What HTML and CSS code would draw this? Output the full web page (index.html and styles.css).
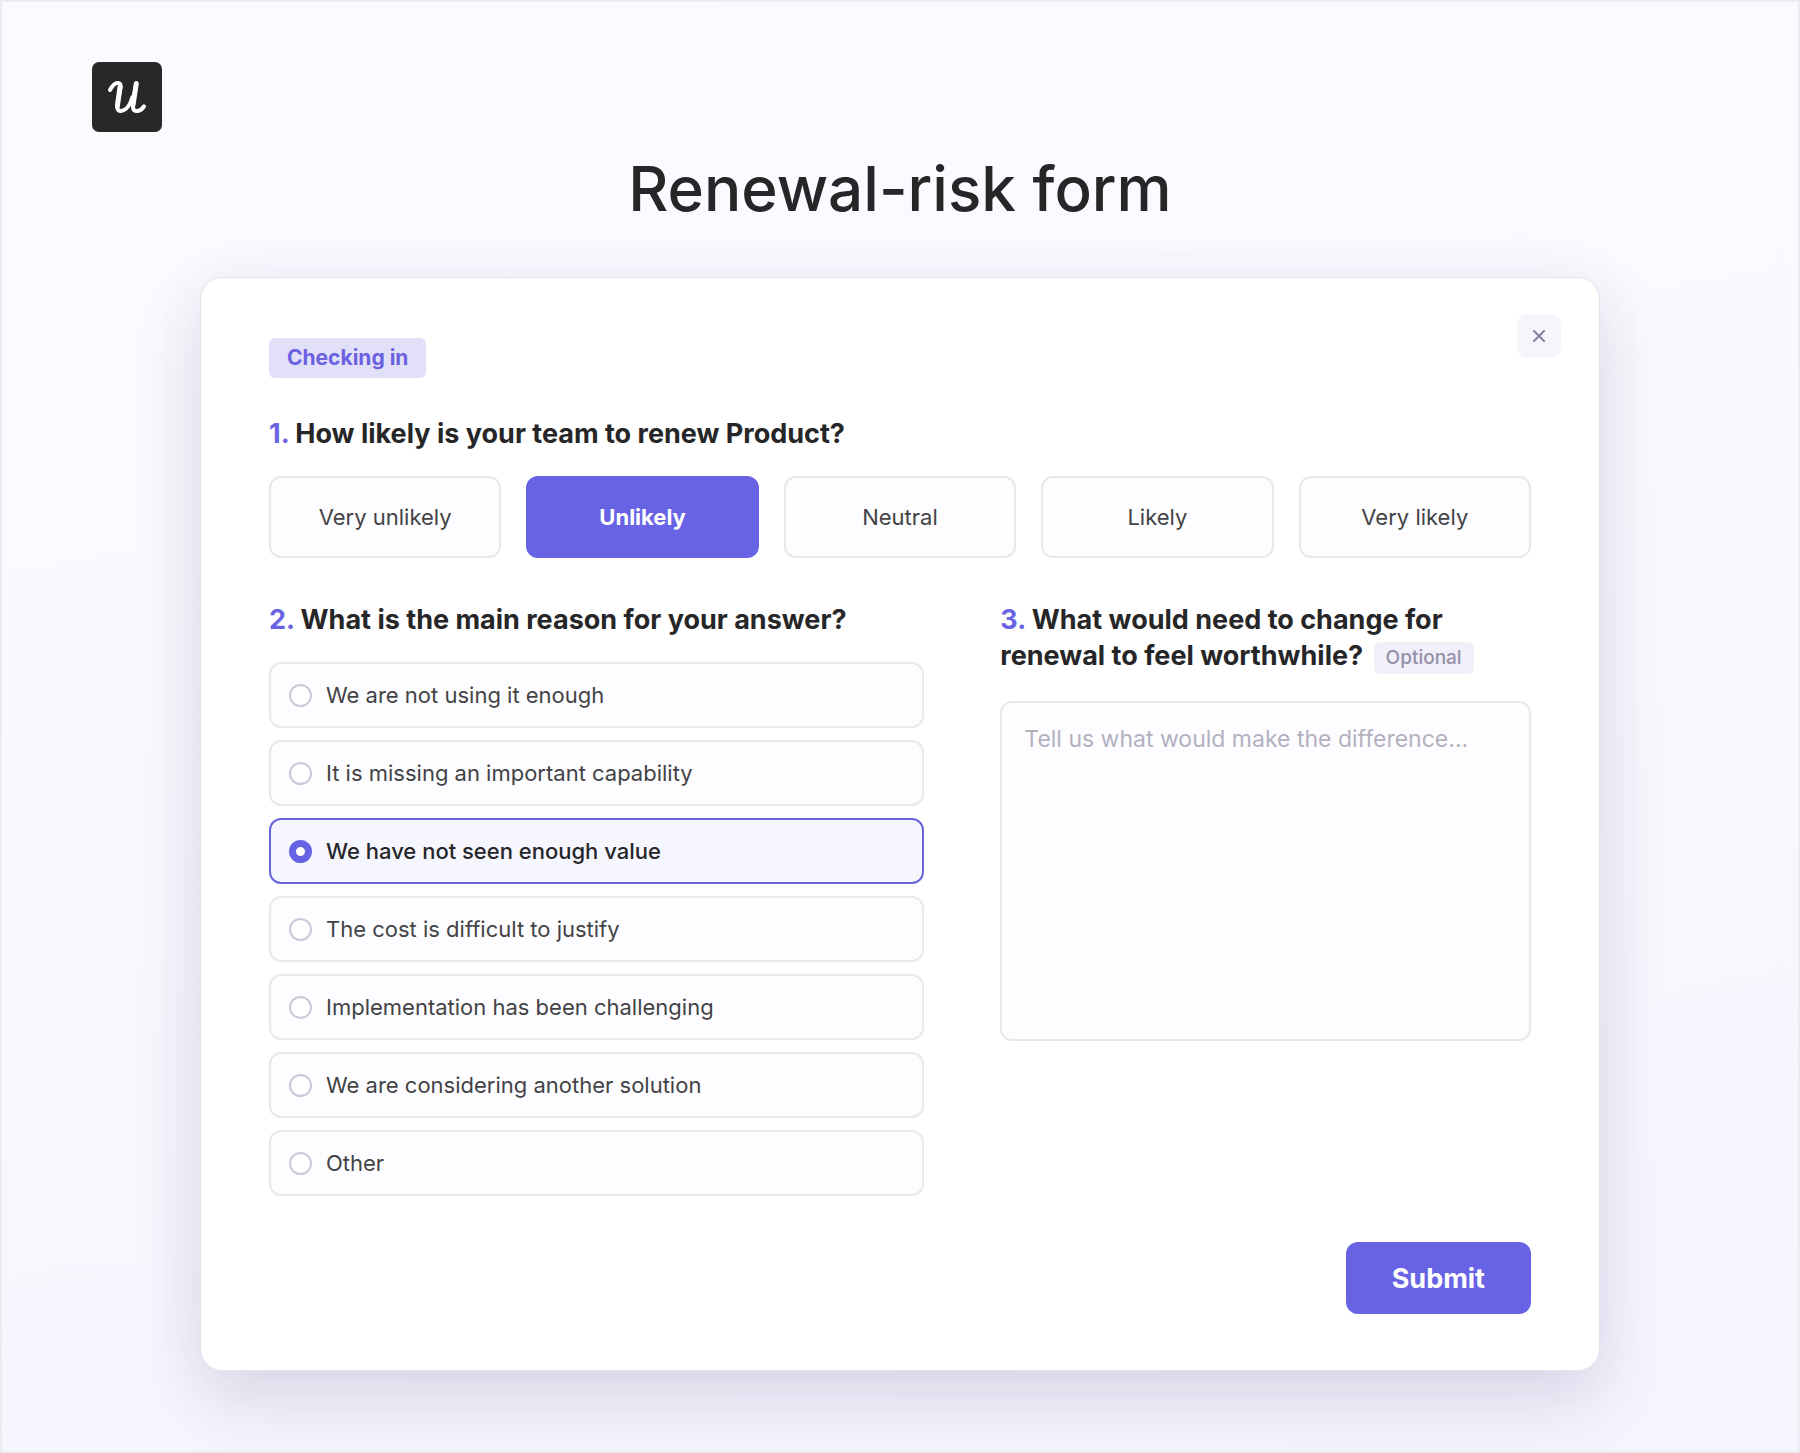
FILE: index.html
```html
<!DOCTYPE html>
<html lang="en">

<head>
  <meta charset="utf-8">
  <meta name="viewport" content="width=device-width, initial-scale=1">
  <title>Renewal-risk form</title>
  <link rel="stylesheet" href="styles.css">
</head>

<body>
  <header>
    <a href="#" class="logo" aria-label="Home">
      <svg viewBox="0 0 70 70" width="70" height="70" aria-hidden="true">
        <path d="M18 28 C21 22.5 24.5 20.4 27 21.2 C29.5 22 28.6 25 28 29 L25.4 42 C24.6 47 26.2 49.4 29 49 C34.5 48.4 38.6 42 40.4 35" />
        <path d="M44.4 21 L41.2 41 C40.4 46.5 41.4 49 44.4 49 C47.5 49 50 47.6 52 44.4" />
        <path d="M28 25 L25.4 44 M44.2 22 L41 43" class="thick" />
      </svg>
    </a>
    <h1>Renewal-risk form</h1>
  </header>

  <main>
    <form class="card">
      <button type="button" class="close-btn" aria-label="Close">
        <svg viewBox="0 0 12 12" width="12" height="12" aria-hidden="true">
          <path d="M1 1 L11 11 M11 1 L1 11" />
        </svg>
      </button>

      <span class="tag">Checking in</span>

      <section>
        <h2><span class="num">1.</span> How likely is your team to renew Product?</h2>
        <div class="scale">
          <button type="button" class="scale-btn">Very unlikely</button>
          <button type="button" class="scale-btn selected" aria-pressed="true">Unlikely</button>
          <button type="button" class="scale-btn">Neutral</button>
          <button type="button" class="scale-btn">Likely</button>
          <button type="button" class="scale-btn">Very likely</button>
        </div>
      </section>

      <div class="columns">
        <section>
          <h2 id="reason-title"><span class="num">2.</span> What is the main reason for your answer?</h2>
          <div class="reasons" role="radiogroup" aria-labelledby="reason-title">
            <label class="reason"><input type="radio" name="reason">We are not using it enough</label>
            <label class="reason"><input type="radio" name="reason">It is missing an important capability</label>
            <label class="reason"><input type="radio" name="reason" checked>We have not seen enough value</label>
            <label class="reason"><input type="radio" name="reason">The cost is difficult to justify</label>
            <label class="reason"><input type="radio" name="reason">Implementation has been challenging</label>
            <label class="reason"><input type="radio" name="reason">We are considering another solution</label>
            <label class="reason"><input type="radio" name="reason">Other</label>
          </div>
        </section>

        <section class="comment">
          <h2><label for="change"><span class="num">3.</span> What would need to change for renewal to feel worthwhile?</label> <span class="optional">Optional</span></h2>
          <textarea id="change" placeholder="Tell us what would make the difference..."></textarea>
        </section>
      </div>

      <div class="actions">
        <button type="submit" class="submit-btn">Submit</button>
      </div>
    </form>
  </main>

  <script>
    const scaleButtons = document.querySelectorAll('.scale-btn');

    scaleButtons.forEach((btn) => {
      btn.addEventListener('click', () => {
        scaleButtons.forEach((other) => {
          other.classList.toggle('selected', other === btn);
          other.setAttribute('aria-pressed', other === btn);
        });
      });
    });

    document.querySelector('.card').addEventListener('submit', (e) => e.preventDefault());
  </script>
</body>

</html>
```

FILE: styles.css
```css
* {
  box-sizing: border-box;
}

body {
  margin: 0;
  min-height: 100vh;
  border: 2px solid #ededf0;
  background: linear-gradient(170deg, #fbfaff 0%, #f9f9fe 35%, #f5f5ff 100%);
  font-family: Inter, 'Liberation Sans', sans-serif;
  color: #262628;
}

header {
  padding: 60px 90px 0;
}

.logo {
  display: block;
  width: 70px;
  height: 70px;
  border-radius: 7px;
  background-color: #282828;
}

.logo path {
  fill: none;
  stroke: white;
  stroke-width: 4;
  stroke-linecap: round;
  stroke-linejoin: round;
}

.logo .thick {
  stroke-width: 5;
}

h1 {
  margin: 17px 0 48px;
  font-size: 62px;
  line-height: 80px;
  font-weight: 500;
  text-align: center;
}

main {
  padding: 0 198px 79px;
}

/* Form card */
.card {
  position: relative;
  padding: 60px 68px 56px;
  border: 1px solid #e4e3ee;
  border-radius: 22px;
  background-color: white;
  box-shadow: 0 30px 70px rgba(40, 36, 76, 0.14), 0 0 60px rgba(104, 99, 228, 0.04);
}

.close-btn {
  position: absolute;
  top: 36px;
  right: 38px;
  display: flex;
  align-items: center;
  justify-content: center;
  width: 44px;
  height: 44px;
  padding: 0;
  border: none;
  border-radius: 10px;
  background-color: #f6f5fc;
  cursor: pointer;
}

.close-btn path {
  stroke: #8680a0;
  stroke-width: 2;
  stroke-linecap: round;
}

.tag {
  display: inline-block;
  padding: 0 18px;
  border-radius: 6px;
  background-color: #e2dff8;
  color: #6a61e0;
  font-size: 21px;
  line-height: 40px;
  font-weight: 700;
}

h2 {
  margin: 38px 0 24px;
  font-size: 27px;
  line-height: 36px;
  font-weight: 700;
}

.num {
  color: #6a63e4;
}

.scale {
  display: grid;
  grid-template-columns: repeat(5, 1fr);
  gap: 25px;
}

.scale-btn {
  height: 82px;
  border: 2px solid #e8e8ed;
  border-radius: 12px;
  background-color: #fdfdff;
  color: #434346;
  font-family: inherit;
  font-size: 22px;
  cursor: pointer;
}

.scale-btn.selected {
  border-color: #6863e4;
  background-color: #6863e4;
  color: white;
  font-weight: 700;
}

.columns {
  display: grid;
  grid-template-columns: 1.235fr 1fr;
  gap: 76px;
  margin-top: 6px;
}

/* Reasons list */
.reasons {
  display: flex;
  flex-direction: column;
  gap: 12px;
}

.reason {
  display: flex;
  align-items: center;
  gap: 14px;
  height: 66px;
  padding: 0 18px;
  border: 2px solid #e8e8ed;
  border-radius: 12px;
  background-color: #fdfdff;
  color: #434346;
  font-size: 22px;
  cursor: pointer;
}

.reason input {
  appearance: none;
  width: 23px;
  height: 23px;
  margin: 0;
  border: 2px solid #cbc8da;
  border-radius: 50%;
  background-color: white;
}

.reason input:checked {
  border: 7px solid #6863e4;
}

.reason:has(input:checked) {
  border-color: #6a63d8;
  background-color: #f6f6ff;
  color: #262628;
  font-weight: 500;
}

/* Free text answer */
.comment h2 {
  margin-bottom: 27px;
}

.optional {
  display: inline-block;
  margin-left: 4px;
  padding: 0 12px;
  border-radius: 6px;
  background-color: #f1eff9;
  color: #9490a8;
  font-size: 19px;
  line-height: 32px;
  font-weight: 500;
  vertical-align: middle;
}

textarea {
  display: block;
  width: 100%;
  height: 340px;
  padding: 20px 22px;
  border: 2px solid #e8e8ed;
  border-radius: 12px;
  background-color: #fdfdff;
  color: #434346;
  font-family: inherit;
  font-size: 23px;
  line-height: 32px;
  resize: none;
}

textarea::placeholder {
  color: #b3b1bf;
}

.actions {
  display: flex;
  justify-content: flex-end;
  margin-top: 46px;
}

.submit-btn {
  height: 72px;
  padding: 0 46px;
  border: none;
  border-radius: 12px;
  background-color: #6863e4;
  color: white;
  font-family: inherit;
  font-size: 27px;
  font-weight: 700;
  cursor: pointer;
}
```
